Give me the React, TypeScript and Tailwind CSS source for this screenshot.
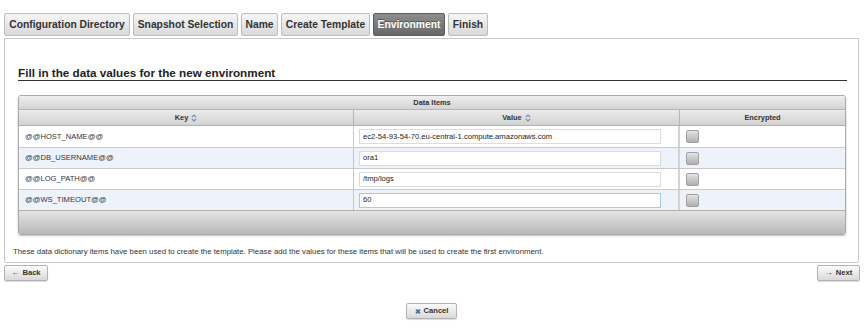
import React from "react";

type TTab = { label: string; w: string; active?: boolean };

const tabs: TTab[] = [
    { label: "Configuration Directory", w: "w-[126px]" },
    { label: "Snapshot Selection", w: "w-[105px]" },
    { label: "Name", w: "w-[37px]" },
    { label: "Create Template", w: "w-[89px]" },
    { label: "Environment", w: "w-[72px]", active: true },
    { label: "Finish", w: "w-[40px]" },
];

const rows = [
    { key: "@@HOST_NAME@@", value: "ec2-54-93-54-70.eu-central-1.compute.amazonaws.com" },
    { key: "@@DB_USERNAME@@", value: "ora1" },
    { key: "@@LOG_PATH@@", value: "/tmp/logs" },
    { key: "@@WS_TIMEOUT@@", value: "60", focused: true },
];

const SortIcon = () => (
    <svg width="6" height="8" viewBox="0 0 6 8" className="ml-[3px]">
        <path d="M0.8 3.2 L3 1 L5.2 3.2 M0.8 4.8 L3 7 L5.2 4.8" fill="none" stroke="#6d8fb4" strokeWidth="1.1" />
    </svg>
);

const Button = ({ icon, text, w }: { icon: React.ReactNode; text: string; w: string }) => (
    <button
        className={`${w} h-[16px] flex items-center justify-center gap-[3px] rounded-[2px] border border-[#b3b3b3] bg-linear-to-b from-[#fbfbfb] to-[#d9d9d9] shadow-[0_1px_1px_rgba(0,0,0,0.15)] text-[7.6px] font-bold text-[#333]`}
    >
        {icon}
        <span>{text}</span>
    </button>
);

export default function App() {
    return (
        <div className="w-[865px] h-[333px] bg-white font-['Liberation_Sans',Arial,sans-serif] text-[#333]">
            {/* wizard steps */}
            <div className="flex gap-[3px] pl-[4px] pt-[13px]">
                {tabs.map((t) => (
                    <div
                        key={t.label}
                        className={`${t.w} h-[23px] flex items-center justify-center rounded-[2px] border text-[10.3px] font-bold ${
                            t.active
                                ? "border-[#5c5c5c] bg-linear-to-b from-[#8e8e8e] to-[#686868] text-white [text-shadow:0_-1px_0_rgba(0,0,0,0.4)]"
                                : "border-[#bdbdbd] bg-linear-to-b from-[#f6f6f6] to-[#d9d9d9] text-[#333]"
                        }`}
                    >
                        {t.label}
                    </div>
                ))}
            </div>

            <div className="mx-[4px] mt-[2px] w-[855px] border border-[#c9c9c9] rounded-b-[2px] pl-[8px] pr-[11px] pb-[5px]">
                <div className="ml-[5px]">
                    <div className="mt-[27px] h-[15px] leading-[14px] border-b border-[#333] text-[11.7px] font-bold text-[#222]">
                        Fill in the data values for the new environment
                    </div>

                    <div className="mt-[14px] w-[828px] border border-[#a9a9a9] rounded-[3px] shadow-[0_1px_2px_rgba(0,0,0,0.25)] overflow-hidden">
                        <div className="h-[14px] flex items-center justify-center bg-linear-to-b from-[#eeeeee] to-[#d4d4d4] border-b border-[#b5b5b5] text-[7.4px] font-bold">
                            Data Items
                        </div>
                        <div className="h-[16px] flex bg-linear-to-b from-[#ebebeb] to-[#d2d2d2] border-b border-[#b0b0b0] text-[7.4px] font-bold">
                            <div className="w-[335px] flex items-center justify-center border-r border-[#b5b5b5]">
                                Key <SortIcon />
                            </div>
                            <div className="w-[326px] flex items-center justify-center border-r border-[#b5b5b5]">
                                Value <SortIcon />
                            </div>
                            <div className="flex-1 flex items-center justify-center">Encrypted</div>
                        </div>

                        {rows.map((r, i) => (
                            <div
                                key={r.key}
                                className={`h-[21px] flex text-[7.6px] ${i > 0 ? "border-t border-[#c9c9c9]" : ""} ${
                                    i % 2 === 1 ? "bg-[#eef2fa]" : "bg-white"
                                }`}
                            >
                                <div className="w-[335px] flex items-center pl-[6px] border-r border-[#c6c6c6]">{r.key}</div>
                                <div className="w-[326px] flex items-center pl-[5px] border-r-2 border-[#d3d3d3]">
                                    <div
                                        className={`w-[302px] h-[15px] flex items-center pl-[3px] bg-white border ${
                                            r.focused ? "border-[#a9c9ea]" : "border-[#dcdcdc]"
                                        } text-[#222]`}
                                    >
                                        {r.value}
                                    </div>
                                </div>
                                <div className="flex-1 flex items-center pl-[6px]">
                                    <div className="w-[13px] h-[13px] rounded-[2px] border border-[#a0a0a0] bg-linear-to-b from-[#e3e3e3] to-[#b0b0b0]" />
                                </div>
                            </div>
                        ))}

                        <div className="h-[24px] border-t border-[#b0b0b0] bg-linear-to-b from-[#e4e4e4] to-[#b9b9b9]" />
                    </div>
                </div>

                <div className="mt-[12px] leading-[10px] text-[7.8px] text-[#333]">
                    These data dictionary items have been used to create the template. Please add the values for these items that will be used to create the first environment.
                </div>
            </div>

            <div className="flex justify-between pl-[4px] pr-[5px] mt-[2px]">
                <Button w="w-[44px]" text="Back" icon={<span className="text-[8px] leading-none font-normal">←</span>} />
                <Button w="w-[43px]" text="Next" icon={<span className="text-[8px] leading-none font-normal">→</span>} />
            </div>

            <div className="flex justify-center mt-[22px] pr-[2px]">
                <Button
                    w="w-[51px]"
                    text="Cancel"
                    icon={<span className="text-[7px] leading-none text-[#50739a]">✖</span>}
                />
            </div>
        </div>
    );
}
